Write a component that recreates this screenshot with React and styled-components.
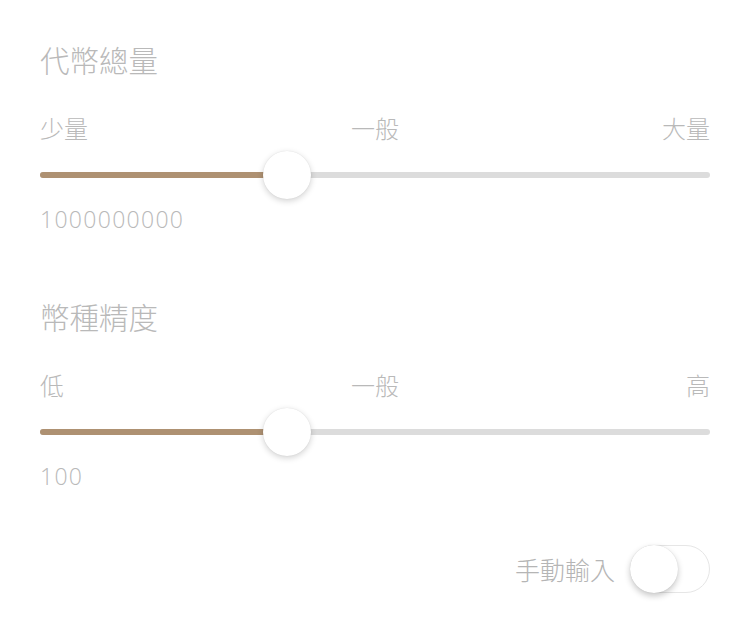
import styled, { createGlobalStyle } from "styled-components";

const GlobalStyle = createGlobalStyle`
  html, body {
    margin: 0;
    padding: 0;
    background: #ffffff;
  }
  body {
    font-family: "Open Sans", "Noto Sans CJK TC", sans-serif;
  }
`;

const Page = styled.div`
  width: 750px;
  height: 644px;
  box-sizing: border-box;
  padding: 39px 40px 0;
  display: flex;
  flex-direction: column;
`;

const Section = styled.section`
  display: flex;
  flex-direction: column;
  margin-bottom: 62px;
`;

const Title = styled.h2`
  margin: 0;
  font-family: "Noto Sans CJK TC", sans-serif;
  font-size: 29.5px;
  font-weight: 300;
  line-height: 40px;
  color: #b9b9b9;
`;

const Marks = styled.div`
  display: flex;
  justify-content: space-between;
  margin-top: 34px;
  font-family: "Noto Sans CJK TC", sans-serif;
  font-size: 24px;
  font-weight: 300;
  line-height: 30px;
  color: #b9b9b9;
`;

const Track = styled.div`
  position: relative;
  height: 48px;
  margin-top: 8px;
  display: flex;
  align-items: center;

  &::before {
    content: "";
    flex: 1;
    height: 6px;
    border-radius: 3px;
    background: #dcdcdc;
  }
`;

const Fill = styled.div`
  position: absolute;
  left: 0;
  top: 21px;
  height: 6px;
  border-radius: 3px;
  background: #ae9172;
`;

const Thumb = styled.div`
  position: absolute;
  top: 0;
  width: 48px;
  height: 48px;
  margin-left: -24px;
  border-radius: 50%;
  background: #ffffff;
  box-shadow: 0 2px 6px rgba(0, 0, 0, 0.18), 0 0 1px rgba(0, 0, 0, 0.12);
`;

const Value = styled.div`
  margin-top: 5px;
  font-size: 23px;
  font-weight: 300;
  line-height: 30px;
  letter-spacing: 1.3px;
  color: #b9b9b9;
`;

const ToggleRow = styled.label`
  margin-top: -8px;
  display: flex;
  justify-content: flex-end;
  align-items: center;
  gap: 15px;
`;

const ToggleLabel = styled.span`
  font-family: "Noto Sans CJK TC", sans-serif;
  font-size: 25px;
  font-weight: 300;
  color: #b5b5b5;
`;

const Switch = styled.div`
  position: relative;
  width: 80px;
  height: 48px;
  box-sizing: border-box;
  border: 1.5px solid #e6e6e6;
  border-radius: 24px;
  background: #ffffff;
`;

const SwitchKnob = styled.div`
  position: absolute;
  left: -1.5px;
  top: -1.5px;
  width: 48px;
  height: 48px;
  border-radius: 50%;
  background: #ffffff;
  box-shadow: 0 3px 6px rgba(0, 0, 0, 0.22), 0 0 1px rgba(0, 0, 0, 0.15);
`;

function Slider({ title, marks, percent, value }) {
  return (
    <Section>
      <Title>{title}</Title>
      <Marks>
        {marks.map((m) => (
          <span key={m}>{m}</span>
        ))}
      </Marks>
      <Track>
        <Fill style={{ width: `${percent}%` }} />
        <Thumb style={{ left: `${percent}%` }} />
      </Track>
      <Value>{value}</Value>
    </Section>
  );
}

export default function App() {
  return (
    <>
      <GlobalStyle />
      <Page>
        <Slider
          title="代幣總量"
          marks={["少量", "一般", "大量"]}
          percent={36.9}
          value="1000000000"
        />
        <Slider
          title="幣種精度"
          marks={["低", "一般", "高"]}
          percent={36.9}
          value="100"
        />
        <ToggleRow>
          <ToggleLabel>手動輸入</ToggleLabel>
          <Switch>
            <SwitchKnob />
          </Switch>
        </ToggleRow>
      </Page>
    </>
  );
}
